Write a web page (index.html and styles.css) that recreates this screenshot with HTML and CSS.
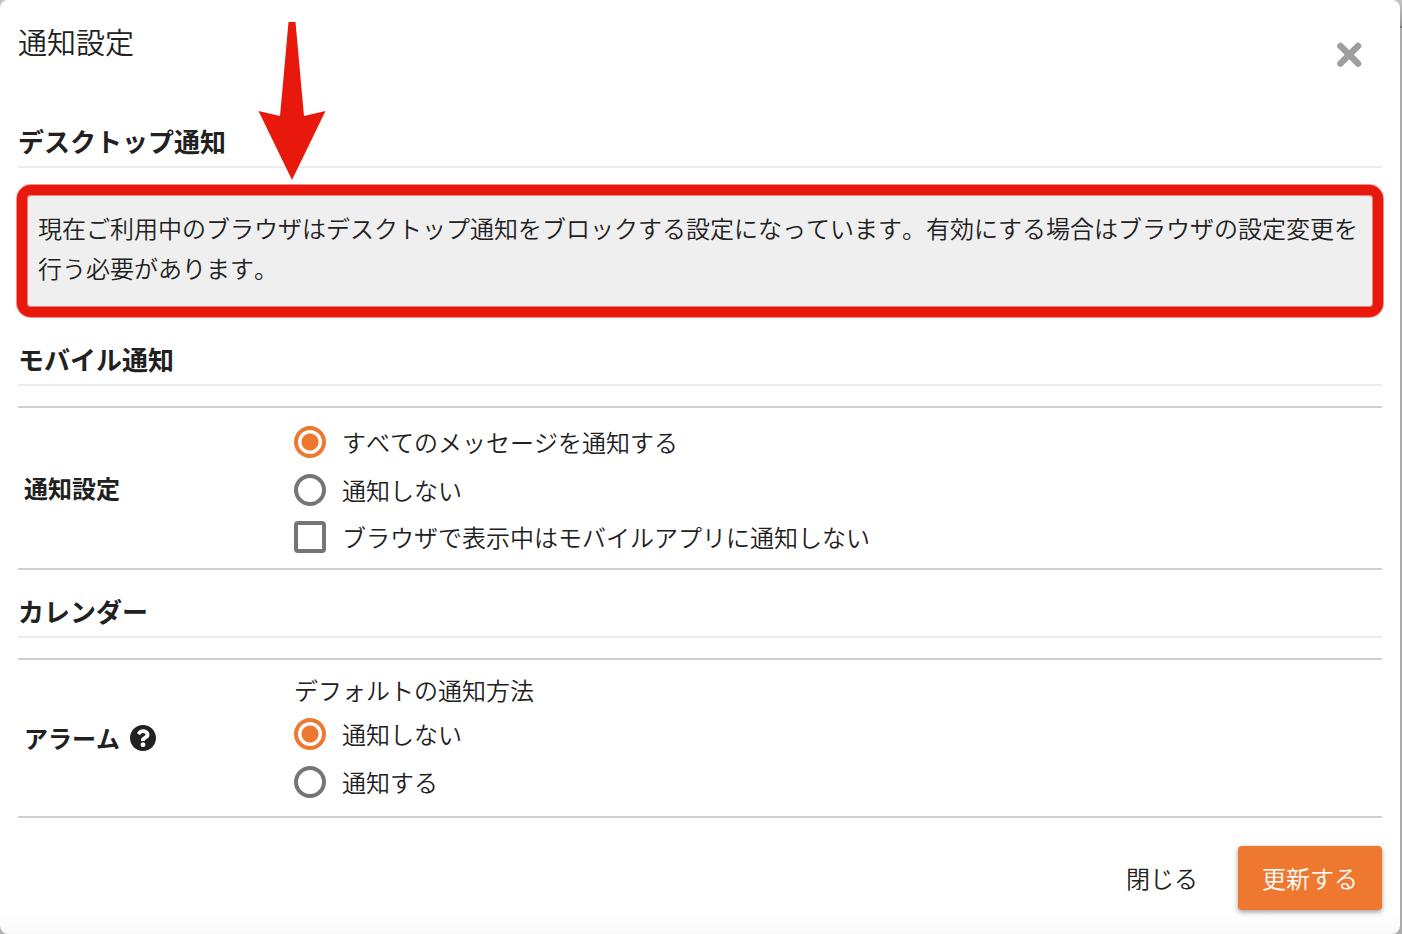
FILE: index.html
```html
<!DOCTYPE html>
<html lang="ja">

<head>
    <meta charset="utf-8">
    <meta name="viewport" content="width=device-width, initial-scale=1">
    <title>通知設定</title>
    <link rel="stylesheet" href="styles.css">
</head>

<body>
    <form class="modal">
        <div class="modal-header">
            <h1 class="modal-title">通知設定</h1>
            <button type="button" class="close" aria-label="閉じる">
                <svg width="26" height="26" viewBox="0 0 26 26">
                    <path d="M4.5 4L22 21.500M22 4L4.500 21.500" stroke="#9e9e9e" stroke-width="6.600" stroke-linecap="round" />
                </svg>
            </button>
        </div>

        <h2 class="heading">デスクトップ通知</h2>
        <div class="notice">
            現在ご利用中のブラウザはデスクトップ通知をブロックする設定になっています。有効にする場合はブラウザの設定変更を行う必要があります。
            <svg class="arrow" width="68" height="158" viewBox="0 0 68 158">
                <polygon points="30.500,0 37.500,0 42,50 46,94 67.500,89 34,158 0.500,89 22,94 26,50" fill="#e8190c" />
            </svg>
        </div>

        <h2 class="heading">モバイル通知</h2>
        <div class="setting" role="group" aria-labelledby="mobile_label">
            <div class="setting-label" id="mobile_label">通知設定</div>
            <div class="setting-body">
                <label class="option"><input type="radio" name="mobile" checked>すべてのメッセージを通知する</label>
                <label class="option"><input type="radio" name="mobile">通知しない</label>
                <label class="option option-check"><input type="checkbox" name="mobile_active">ブラウザで表示中はモバイルアプリに通知しない</label>
            </div>
        </div>

        <h2 class="heading">カレンダー</h2>
        <div class="setting" role="group" aria-labelledby="alarm_label">
            <div class="setting-label" id="alarm_label">
                アラーム
                <svg width="26" height="26" viewBox="8 8 496 496">
                    <path fill="#212121" d="M504 256c0 136.997-111.043 248-248 248S8 392.997 8 256C8 119.083 119.043 8 256 8s248 111.083 248 248zM262.655 90c-54.497 0-89.255 22.957-116.549 63.758-3.536 5.286-2.353 12.415 2.715 16.258l34.699 26.31c5.205 3.947 12.621 3.008 16.665-2.122 17.864-22.658 30.113-35.797 57.303-35.797 20.429 0 45.698 13.148 45.698 32.958 0 14.976-12.363 22.667-32.534 33.976C247.128 238.528 216 254.941 216 296v4c0 6.627 5.373 12 12 12h56c6.627 0 12-5.373 12-12v-1.333c0-28.462 83.186-29.647 83.186-106.667 0-58.002-60.165-102-116.531-102zM256 338c-25.365 0-46 20.635-46 46 0 25.364 20.635 46 46 46s46-20.636 46-46c0-25.365-20.635-46-46-46z" />
                </svg>
            </div>
            <div class="setting-body">
                <div class="caption">デフォルトの通知方法</div>
                <label class="option"><input type="radio" name="alarm" checked>通知しない</label>
                <label class="option"><input type="radio" name="alarm">通知する</label>
            </div>
        </div>

        <div class="modal-footer">
            <button type="button" class="btn">閉じる</button>
            <button type="button" class="btn btn-primary">更新する</button>
        </div>
    </form>
</body>

</html>
```
FILE: styles.css
```css
* {
    box-sizing: border-box;
}

body {
    margin: 0;
    background: linear-gradient(#c4c4c4, #999 26px, #777 26px, #777 28px, #ababab 28px);
    color: #212121;
    font-family: "Noto Sans CJK JP", sans-serif;
    font-size: 24px;
    font-weight: 350;
    font-kerning: none;
}

.modal {
    display: flex;
    flex-direction: column;
    min-height: 100vh;
    margin-right: 2px;
    padding: 20px 18px 24px;
    background: linear-gradient(to top, #f9f9f9, #fff 24px);
    border-radius: 8px;
}

.modal-header {
    display: flex;
    justify-content: space-between;
    align-items: flex-start;
    height: 80px;
}

.modal-title {
    margin: 0;
    font-size: 29px;
    font-weight: 350;
    line-height: 42px;
}

.close {
    display: flex;
    padding: 10px;
    margin: 12px 10px 0 0;
    border: 0;
    background: none;
}

.heading {
    margin: 24px 0 0;
    padding-bottom: 8px;
    border-bottom: 2px solid #ececec;
    font-size: 26px;
    font-weight: 700;
    line-height: 34px;
}

.notice {
    position: relative;
    margin: 17px -1px 1px;
    padding: 13px 11px 19px;
    background-color: #efefef;
    border: 10px solid #e8190c;
    border-radius: 14px;
    box-shadow: 0 0 0 1px rgba(232, 25, 12, 0.5), inset 0 0 0 1px rgba(232, 25, 12, 0.5);
    line-height: 40px;
}

.arrow {
    position: absolute;
    left: 231px;
    top: -173px;
}

.setting {
    display: flex;
    align-items: center;
    margin-top: 20px;
    padding: 10px 6px;
    border-top: 2px solid #d0d0d0;
    border-bottom: 2px solid #d0d0d0;
}

.setting-label {
    display: flex;
    align-items: center;
    gap: 10px;
    width: 270px;
    padding-bottom: 2px;
    font-weight: 700;
}

.setting-label svg {
    margin-top: 2px;
}

.option {
    display: flex;
    align-items: center;
    gap: 16px;
    height: 48px;
    padding-bottom: 2px;
}

.option-check {
    height: 46px;
    margin-bottom: -2px;
}

.option input {
    appearance: none;
    width: 32px;
    height: 32px;
    margin: 2px 0 0;
    border: 4px solid #757575;
    border-radius: 50%;
}

.option input[type="checkbox"] {
    border-radius: 4px;
}

.option input[type="radio"]:checked {
    border-color: #ee7830;
    background: radial-gradient(circle, #ee7830 8px, transparent 9px);
}

.caption {
    line-height: 40px;
}

.modal-footer {
    display: flex;
    justify-content: flex-end;
    gap: 16px;
    margin-top: 28px;
}

.btn {
    height: 64px;
    padding: 0 24px 2px;
    border: 0;
    border-radius: 4px;
    background: none;
    color: #212121;
    font: inherit;
}

.btn-primary {
    background-color: #ee7830;
    box-shadow: 0 2px 5px rgba(0, 0, 0, 0.4);
    color: #fff;
}
```
